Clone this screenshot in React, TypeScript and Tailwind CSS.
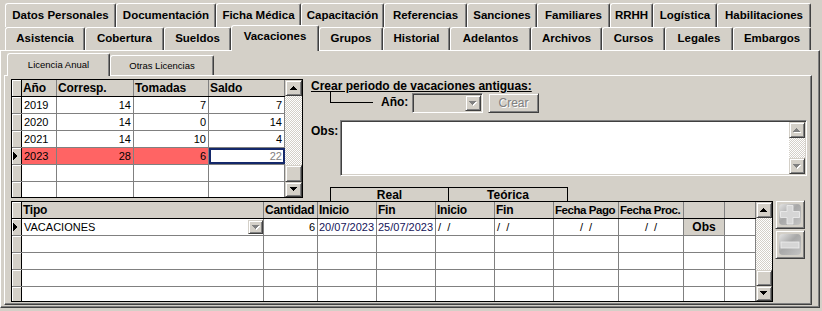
import React from "react";

const raised =
  "bg-[#d4d0c8] border border-t-[#d4d0c8] border-l-[#d4d0c8] border-r-[#404040] border-b-[#404040] shadow-[inset_1px_1px_0_#ffffff,inset_-1px_-1px_0_#808080]";
const sunken =
  "border border-t-[#808080] border-l-[#808080] border-r-white border-b-white shadow-[inset_1px_1px_0_#404040,inset_-1px_-1px_0_#d4d0c8]";
const checker =
  "bg-[image:repeating-conic-gradient(#ffffff_0%_25%,#d4d0c8_0%_50%)] bg-size-[2px_2px]";

const T1 = [
  { l: "Datos Personales", w: "w-[111px]" },
  { l: "Documentación", w: "w-[100px]" },
  { l: "Ficha Médica", w: "w-[85px]" },
  { l: "Capacitación", w: "w-[83px]" },
  { l: "Referencias", w: "w-[83px]" },
  { l: "Sanciones", w: "w-[70px]" },
  { l: "Familiares", w: "w-[73px]" },
  { l: "RRHH", w: "w-[43px]" },
  { l: "Logística", w: "w-[64px]" },
  { l: "Habilitaciones", w: "w-[94px]" },
];
const T2 = [
  { l: "Asistencia", w: "w-[80px]" },
  { l: "Cobertura", w: "w-[79px]" },
  { l: "Sueldos", w: "w-[67px]" },
  { l: "Vacaciones", w: "w-[88px]", a: true },
  { l: "Grupos", w: "w-[64px]" },
  { l: "Historial", w: "w-[67px]" },
  { l: "Adelantos", w: "w-[81px]" },
  { l: "Archivos", w: "w-[71px]" },
  { l: "Cursos", w: "w-[63px]" },
  { l: "Legales", w: "w-[68px]" },
  { l: "Embargos", w: "w-[78px]" },
];

const tabBase =
  "bg-[#d4d0c8] flex items-center justify-center border-t border-l border-r border-t-white border-l-white border-r-[#404040] rounded-tl-[3px] rounded-tr-[2px] shadow-[inset_-1px_0_0_#808080] font-bold text-[11.5px] whitespace-nowrap";

function Arrow({ dir, disabled }: { dir: "up" | "down"; disabled?: boolean }) {
  const rows: [number, number][] = [
    [3, 1],
    [2, 3],
    [1, 5],
    [0, 7],
  ];
  const r = dir === "up" ? rows : [...rows].reverse();
  return (
    <svg width="8" height="5" shapeRendering="crispEdges">
      {disabled &&
        r.map(([x, w], i) => (
          <rect key={"s" + i} x={x + 1} y={i + 1} width={w} height={1} fill="#ffffff" />
        ))}
      {r.map(([x, w], i) => (
        <rect key={i} x={x} y={i} width={w} height={1} fill={disabled ? "#808080" : "#000000"} />
      ))}
    </svg>
  );
}

function SBtn({ dir, h, disabled }: { dir: "up" | "down"; h: string; disabled?: boolean }) {
  return (
    <div className={`${raised} ${h} w-full flex items-center justify-center shrink-0`}>
      <Arrow dir={dir} disabled={disabled} />
    </div>
  );
}

function Pointer() {
  return (
    <svg width="5" height="8" shapeRendering="crispEdges">
      <path d="M1 0 L5 4 L1 8 Z" fill="#000" />
    </svg>
  );
}

function Ind({ cur }: { cur?: boolean }) {
  return (
    <div className="w-[10px] shrink-0 border-r border-black bg-[#d4d0c8] shadow-[inset_1px_1px_0_#ffffff] flex items-center">
      {cur && <Pointer />}
    </div>
  );
}

const LW = ["w-[35px]", "w-[77px]", "w-[75px]", "w-[76px]"];
const LH = ["Año", "Corresp.", "Tomadas", "Saldo"];
const LROWS = [
  ["2019", "14", "7", "7"],
  ["2020", "14", "0", "14"],
  ["2021", "14", "10", "4"],
];

function LeftGrid() {
  return (
    <div className="w-[292px] h-[119px] border border-black bg-white flex shrink-0">
      <div className="w-[273px] flex flex-col">
        <div className="h-[17px] flex border-b border-black bg-[#d4d0c8] font-bold text-[12px] tracking-[-0.1px]">
          <Ind />
          {LH.map((h, i) => (
            <div key={i} className={`${LW[i]} shrink-0 border-r border-[#808080] pl-[1px] leading-[16px] overflow-hidden whitespace-nowrap`}>
              {h}
            </div>
          ))}
        </div>
        {LROWS.map((r, ri) => (
          <div key={ri} className="h-[17px] flex border-b border-[#808080] text-[11px] leading-[16px]">
            <Ind />
            {r.map((c, i) => (
              <div
                key={i}
                className={`${LW[i]} shrink-0 border-r border-[#808080] ${i === 0 ? "pl-[2px]" : "text-right pr-[2px]"}`}
              >
                {c}
              </div>
            ))}
          </div>
        ))}
        <div className="h-[17px] flex border-b border-[#808080] text-[11px] leading-[16px]">
          <Ind cur />
          <div className={`${LW[0]} shrink-0 border-r border-[#808080] bg-[#ff6464] pl-[2px]`}>2023</div>
          <div className={`${LW[1]} shrink-0 border-r border-[#808080] bg-[#ff6464] text-right pr-[2px]`}>28</div>
          <div className={`${LW[2]} shrink-0 border-r border-[#808080] bg-[#ff6464] text-right pr-[2px]`}>6</div>
          <div className={`${LW[3]} shrink-0 border-2 border-[#14286a] text-right pr-[1px] leading-[12px] text-[#808080]`}>22</div>
        </div>
        {[0, 1].map((k) => (
          <div key={k} className={`${k === 0 ? "h-[17px] border-b" : "h-[15px]"} flex border-[#808080]`}>
            <Ind />
            {LW.map((w, i) => (
              <div key={i} className={`${w} shrink-0 border-r border-[#808080]`} />
            ))}
          </div>
        ))}
      </div>
      <div className="w-[17px] flex flex-col">
        <SBtn dir="up" h="h-[16px]" />
        <div className={`flex-1 ${checker}`} />
        <div className={`${raised} h-[17px] shrink-0`} />
        <SBtn dir="down" h="h-[15px]" />
      </div>
    </div>
  );
}

const BW = [
  "w-[242px]",
  "w-[54px]",
  "w-[59px]",
  "w-[59px]",
  "w-[59px]",
  "w-[59px]",
  "w-[65px]",
  "w-[65px]",
  "w-[41px]",
  "w-[31px]",
];
const BH = ["Tipo", "Cantidad", "Inicio", "Fin", "Inicio", "Fin", "Fecha Pago", "Fecha Proc.", "", ""];

function BottomGrid() {
  const date = "text-[#14145a] pl-[1px]";
  return (
    <div className="w-[762px] h-[101px] border border-black bg-white flex shrink-0">
      <div className="w-[744px] flex flex-col">
        <div className="h-[17px] flex border-b border-black bg-[#d4d0c8] font-bold text-[12px] tracking-[-0.25px]">
          <Ind />
          {BH.map((h, i) => (
            <div
              key={i}
              className={`${BW[i]} shrink-0 border-r border-[#808080] pl-[1px] leading-[16px] overflow-hidden whitespace-nowrap ${
                i === 6 || i === 7 ? "text-[11.5px] tracking-[-0.45px]" : ""
              }`}
            >
              {h}
            </div>
          ))}
        </div>
        <div className="h-[17px] flex border-b border-[#808080] text-[11px] leading-[16px]">
          <Ind cur />
          <div className={`${BW[0]} shrink-0 border-r border-[#808080] pl-[2px] flex items-center justify-between`}>
            <span>VACACIONES</span>
            <div className={`${raised} w-[15px] h-[14px] flex items-center justify-center`}>
              <Arrow dir="down" disabled />
            </div>
          </div>
          <div className={`${BW[1]} shrink-0 border-r border-[#808080] text-right pr-[2px]`}>6</div>
          <div className={`${BW[2]} shrink-0 border-r border-[#808080] ${date}`}>20/07/2023</div>
          <div className={`${BW[3]} shrink-0 border-r border-[#808080] ${date}`}>25/07/2023</div>
          <div className={`${BW[4]} shrink-0 border-r border-[#808080] pl-[2px] whitespace-pre`}>/  /</div>
          <div className={`${BW[5]} shrink-0 border-r border-[#808080] pl-[2px] whitespace-pre`}>/  /</div>
          <div className={`${BW[6]} shrink-0 border-r border-[#808080] text-center whitespace-pre`}>/  /</div>
          <div className={`${BW[7]} shrink-0 border-r border-[#808080] text-center whitespace-pre`}>/  /</div>
          <div className={`${BW[8]} shrink-0 border-r border-[#808080] bg-[#d4d0c8] text-center font-bold text-[12px]`}>Obs</div>
          <div className={`${BW[9]} shrink-0 border-r border-[#808080]`} />
        </div>
        {[0, 1, 2, 3].map((k) => (
          <div key={k} className={`${k < 3 ? "h-[17px] border-b" : "h-[14px]"} flex border-[#808080]`}>
            <Ind />
            {BW.map((w, i) => (
              <div key={i} className={`${w} shrink-0 border-r border-[#808080]`} />
            ))}
          </div>
        ))}
      </div>
      <div className="w-[16px] flex flex-col">
        <SBtn dir="up" h="h-[16px]" />
        <div className={`flex-1 ${checker}`} />
        <div className={`${raised} h-[16px] shrink-0`} />
        <SBtn dir="down" h="h-[15px]" />
      </div>
    </div>
  );
}

function PlusMinus({ plus }: { plus?: boolean }) {
  const id = plus ? "gp" : "gm";
  return (
    <div className={`${raised} w-[30px] h-[29px] flex items-center justify-center`}>
      <svg width="24" height="23" viewBox="0 0 24 23">
        <defs>
          <linearGradient id={id} x1="0" y1="0" x2="1" y2="1">
            <stop offset="0" stopColor="#e4e4e4" />
            <stop offset="0.45" stopColor="#a8a8a8" />
            <stop offset="1" stopColor="#c4c4c4" />
          </linearGradient>
        </defs>
        <rect x="1" y="1" width="22" height="21" rx="4" fill={`url(#${id})`} />
        {plus ? (
          <path d="M9 2.5h6v6h6.5v6H15v6.5H9v-6.5H2.5v-6H9z" fill="#d6d6d6" stroke="#efefef" strokeWidth="0.8" />
        ) : (
          <rect x="3" y="9" width="18" height="6" fill="#d6d6d6" stroke="#efefef" strokeWidth="0.8" />
        )}
      </svg>
    </div>
  );
}

export default function App() {
  return (
    <div className="w-[822px] h-[311px] bg-[#d4d0c8] overflow-hidden font-['Liberation_Sans',Arial,sans-serif] text-black select-none">
      {/* tab row 1 */}
      <div className="h-[27px] pt-[3px] pl-[5px] flex">
        {T1.map((t) => (
          <div key={t.l} className={`${tabBase} ${t.w} h-[24px] shrink-0`}>
            {t.l}
          </div>
        ))}
      </div>
      {/* tab row 2 */}
      <div className="h-[23px] pl-[5px] flex items-end">
        {T2.map((t) =>
          t.a ? (
            <div key={t.l} className={`${tabBase} ${t.w} h-[26px] -mb-[1px] pb-[3px] relative z-10 shrink-0`}>
              {t.l}
            </div>
          ) : (
            <div key={t.l} className={`${tabBase} ${t.w} h-[23px] shrink-0`}>
              {t.l}
            </div>
          )
        )}
      </div>
      {/* main panel */}
      <div className="w-[820px] h-[258px] border border-t-white border-l-white border-r-[#404040] border-b-[#404040] shadow-[inset_-1px_-1px_0_#808080] flex flex-col">
        {/* sub tabs */}
        <div className="h-[24px] pl-[6px] flex items-end shrink-0">
          <div className={`${tabBase} !font-normal !text-[9.5px] w-[103px] h-[23px] -mb-[1px] relative z-10 shrink-0`}>
            Licencia Anual
          </div>
          <div className={`${tabBase} !font-normal !text-[9.5px] w-[104px] h-[20px] shrink-0 pt-[1px]`}>
            Otras Licencias
          </div>
        </div>
        {/* sub panel */}
        <div className="ml-[3px] w-[808px] h-[230px] border border-t-white border-l-white border-r-[#404040] border-b-[#404040] shadow-[inset_-1px_-1px_0_#808080] flex flex-col shrink-0">
          <div className="mt-[3px] pl-[6px] flex">
            <LeftGrid />
            <div className="ml-[8px] flex flex-col">
              <div className="h-[14px] font-bold text-[12px] leading-[14px] underline underline-offset-[1px]">
                Crear periodo de vacaciones antiguas:
              </div>
              <div className="h-[20px] flex items-start">
                <div className="ml-[19px] -mt-[2px] w-[43px] h-[12px] border-l border-b border-black shrink-0" />
                <div className="ml-[8px] w-[31px] h-[20px] leading-[19px] font-bold text-[12px] shrink-0">Año:</div>
                <div className={`${sunken} w-[71px] h-[20px] bg-[#d4d0c8] flex justify-end items-start pt-[1px] pr-[1px] shrink-0`}>
                  <div className={`${raised} w-[16px] h-[16px] flex items-center justify-center`}>
                    <Arrow dir="down" disabled />
                  </div>
                </div>
                <div
                  className={`${raised} ml-[5px] w-[51px] h-[20px] flex items-center justify-center text-[12px] text-[#808080] [text-shadow:1px_1px_0_#ffffff] shrink-0`}
                >
                  Crear
                </div>
              </div>
              <div className="mt-[7px] flex">
                <div className="w-[29px] pt-[4px] font-bold text-[12px] leading-[14px] shrink-0">Obs:</div>
                <div className={`${sunken} w-[467px] h-[56px] bg-white flex justify-end p-[1px] shrink-0`}>
                  <div className="w-[16px] flex flex-col">
                    <SBtn dir="up" h="h-[16px]" disabled />
                    <div className={`flex-1 ${checker}`} />
                    <SBtn dir="down" h="h-[16px]" disabled />
                  </div>
                </div>
              </div>
              <div className="mt-[11px] ml-[19px] flex h-[14px] font-bold text-[12px] leading-[14px]">
                <div className="w-[118px] border-t border-l border-black text-center">Real</div>
                <div className="w-[120px] border-t border-l border-r border-black text-center">Teórica</div>
              </div>
            </div>
          </div>
          <div className="pl-[6px] flex">
            <BottomGrid />
            <div className="ml-[2px] -mt-[1px] flex flex-col gap-[1px]">
              <PlusMinus plus />
              <PlusMinus />
            </div>
          </div>
        </div>
      </div>
    </div>
  );
}
